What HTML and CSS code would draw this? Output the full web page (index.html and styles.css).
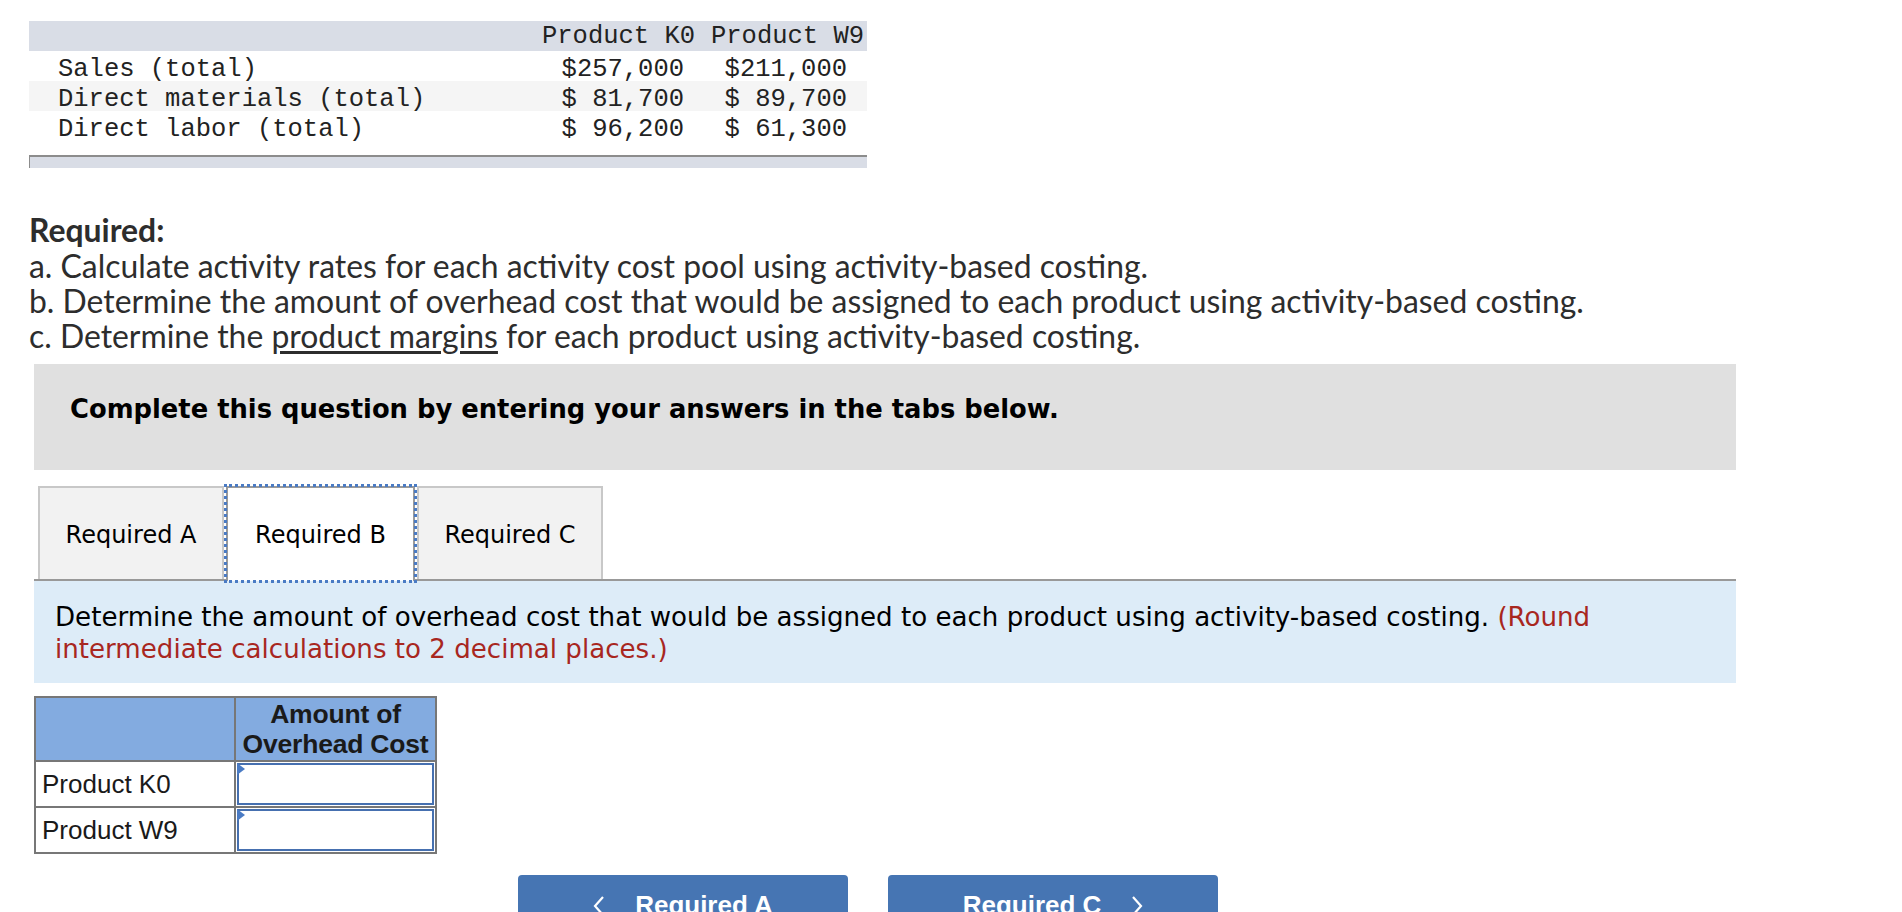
FILE: index.html
```html
<!DOCTYPE html>
<html lang="en">
<head>
<meta charset="utf-8">
<title>Activity-based costing</title>
<link rel="stylesheet" href="styles.css">
</head>
<body>
<div class="facts">
  <div class="facts-row head"><span class="lbl"></span><span class="h2">Product K0</span><span class="h3">Product W9</span></div>
  <div class="facts-row"><span class="lbl">Sales (total)</span><span class="n2">$257,000</span><span class="n3">$211,000</span></div>
  <div class="facts-row alt"><span class="lbl">Direct materials (total)</span><span class="n2">$ 81,700</span><span class="n3">$ 89,700</span></div>
  <div class="facts-row"><span class="lbl">Direct labor (total)</span><span class="n2">$ 96,200</span><span class="n3">$ 61,300</span></div>
  <div class="facts-foot"></div>
</div>

<div class="req">
  <div class="req-title">Required:</div>
  <div>a. Calculate activity rates for each activity cost pool using activity-based costing.</div>
  <div>b. Determine the amount of overhead cost that would be assigned to each product using activity-based costing.</div>
  <div>c. Determine the <span class="ul">product margins</span> for each product using activity-based costing.</div>
</div>

<div class="notice">Complete this question by entering your answers in the tabs below.</div>

<div class="tabs">
  <div class="tab">Required A</div>
  <div class="tab active">Required B</div>
  <div class="tab">Required C</div>
</div>

<div class="instr"><p class="instr-text">Determine the amount of overhead cost that would be assigned to each product using activity-based costing. <span class="red">(Round intermediate calculations to 2 decimal places.)</span></p></div>

<table class="answer">
  <tr class="ahead"><th class="c1"></th><th class="c2">Amount of<br>Overhead Cost</th></tr>
  <tr><td class="c1">Product K0</td><td class="c2"><div class="inp"></div></td></tr>
  <tr><td class="c1">Product W9</td><td class="c2"><div class="inp"></div></td></tr>
</table>

<div class="nav">
  <div class="btn"><svg class="chev" viewBox="0 0 12 22" width="12" height="22"><polyline points="10,2 2,11 10,20" fill="none" stroke="#fff" stroke-width="2.2"/></svg><span>Required A</span></div>
  <div class="btn"><span>Required C</span><svg class="chev" viewBox="0 0 12 22" width="12" height="22"><polyline points="2,2 10,11 2,20" fill="none" stroke="#fff" stroke-width="2.2"/></svg></div>
</div>
</body>
</html>
```
FILE: styles.css
```css
html, body {
  margin: 0;
  padding: 0;
  background: #fff;
}
body {
  font-family: "Liberation Sans", Arial, sans-serif;
  color: #000;
}

.facts {
  margin: 21px 0 0 29px;
  width: 838px;
  font-family: "Liberation Mono", "Courier New", monospace;
  font-size: 25.5px;
  color: #222;
}
.facts-row {
  display: grid;
  grid-template-columns: 511px 160px 167px;
  height: 30px;
  box-sizing: border-box;
  padding-top: 4px;
  align-items: center;
  white-space: pre;
}
.facts-row.head { background: #d9dde6; padding-top: 1px; }
.facts-row.alt { background: #f5f5f5; }
.lbl { padding-left: 29px; }
.h2 { text-align: right; padding-right: 5px; }
.h3 { text-align: right; padding-right: 3px; }
.n2 { text-align: right; padding-right: 16px; }
.n3 { text-align: right; padding-right: 20px; }
.facts-foot {
  margin-top: 14px;
  height: 11px;
  border-top: 2px solid #8c8c8c;
  border-left: 1px solid #8c8c8c;
  background: #d9dde6;
}

.req {
  margin: 44px 0 0 29px;
  font-family: Lato, "Open Sans", sans-serif;
  font-size: 31.9px;
  line-height: 35px;
  color: #2d2d2d;
}
.req-title {
  font-weight: 700;
  line-height: 37px;
}
.ul { text-decoration: underline; text-underline-offset: 3px; }

.notice {
  margin: 10px 0 0 34px;
  width: 1702px;
  height: 106px;
  box-sizing: border-box;
  padding: 29px 0 0 36px;
  background: #e0e0e0;
  font-family: "DejaVu Sans", Verdana, sans-serif;
  font-weight: 700;
  font-size: 25.8px;
  line-height: 32px;
  color: #000;
}

.tabs {
  margin: 16px 0 0 34px;
  width: 1702px;
  padding-left: 4px;
  box-sizing: border-box;
  display: flex;
  align-items: flex-end;
  border-bottom: 2px solid #999;
  height: 95px;
}
.tab {
  width: 186px;
  height: 93px;
  box-sizing: border-box;
  border: 2px solid #c8c8c8;
  border-bottom: none;
  background: #f2f2f2;
  display: flex;
  align-items: center;
  justify-content: center;
  padding-top: 2px;
  font-family: "DejaVu Sans", Verdana, sans-serif;
  font-size: 24px;
  color: #000;
}
.tab.active {
  width: 189px;
  margin: 0 2px -2px 2px;
  height: 95px;
  background: #fff;
  border-color: #9a9a9a;
  outline: 3px dotted #4a7bc4;
  outline-offset: -1px;
  padding-top: 0;
}

.instr {
  margin-left: 34px;
  width: 1702px;
  box-sizing: border-box;
  padding: 20px 21px 18px 21px;
  background: #ddecf8;
}
.instr-text {
  margin: 0;
  font-family: "DejaVu Sans", Verdana, sans-serif;
  font-size: 26.1px;
  line-height: 32px;
  color: #000;
}
.red { color: #a8271f; }

.answer {
  margin: 13px 0 0 34px;
  border-collapse: collapse;
  border: 2px solid #777;
  font-family: "Liberation Sans", Arial, sans-serif;
  font-size: 26px;
}
.answer th, .answer td {
  border: 2px solid #777;
  padding: 0;
}
.answer .c1 { width: 192px; }
.answer .c2 { width: 197px; }
.ahead th {
  background: #83abe0;
  height: 62px;
  font-weight: 700;
  font-size: 26.5px;
  line-height: 30px;
  color: #1a1a1a;
  letter-spacing: -0.2px;
}
.answer td {
  height: 42px;
}
.answer td.c1 {
  padding-left: 6px;
  color: #1a1a1a;
}
.answer td.c2 {
  padding: 1px;
}
.inp {
  position: relative;
  height: 42px;
  box-sizing: border-box;
  border: 2px solid #4670b0;
  background: #fff;
}
.inp::before {
  content: "";
  position: absolute;
  left: -2px;
  top: -2px;
  border-left: 8px solid #4a7bc4;
  border-top: 6px solid transparent;
  border-bottom: 6px solid transparent;
}

.nav {
  margin: 21px 0 0 518px;
  display: flex;
  gap: 40px;
}
.btn {
  width: 330px;
  height: 60px;
  background: #4675b3;
  border-radius: 4px 4px 0 0;
  display: flex;
  justify-content: center;
  align-items: flex-start;
  gap: 30px;
  padding-top: 16px;
  box-sizing: border-box;
  color: #fff;
  font-family: "Liberation Sans", Arial, sans-serif;
  font-weight: 700;
  font-size: 26px;
  line-height: 28px;
}
.chev { margin-top: 4px; }
```
